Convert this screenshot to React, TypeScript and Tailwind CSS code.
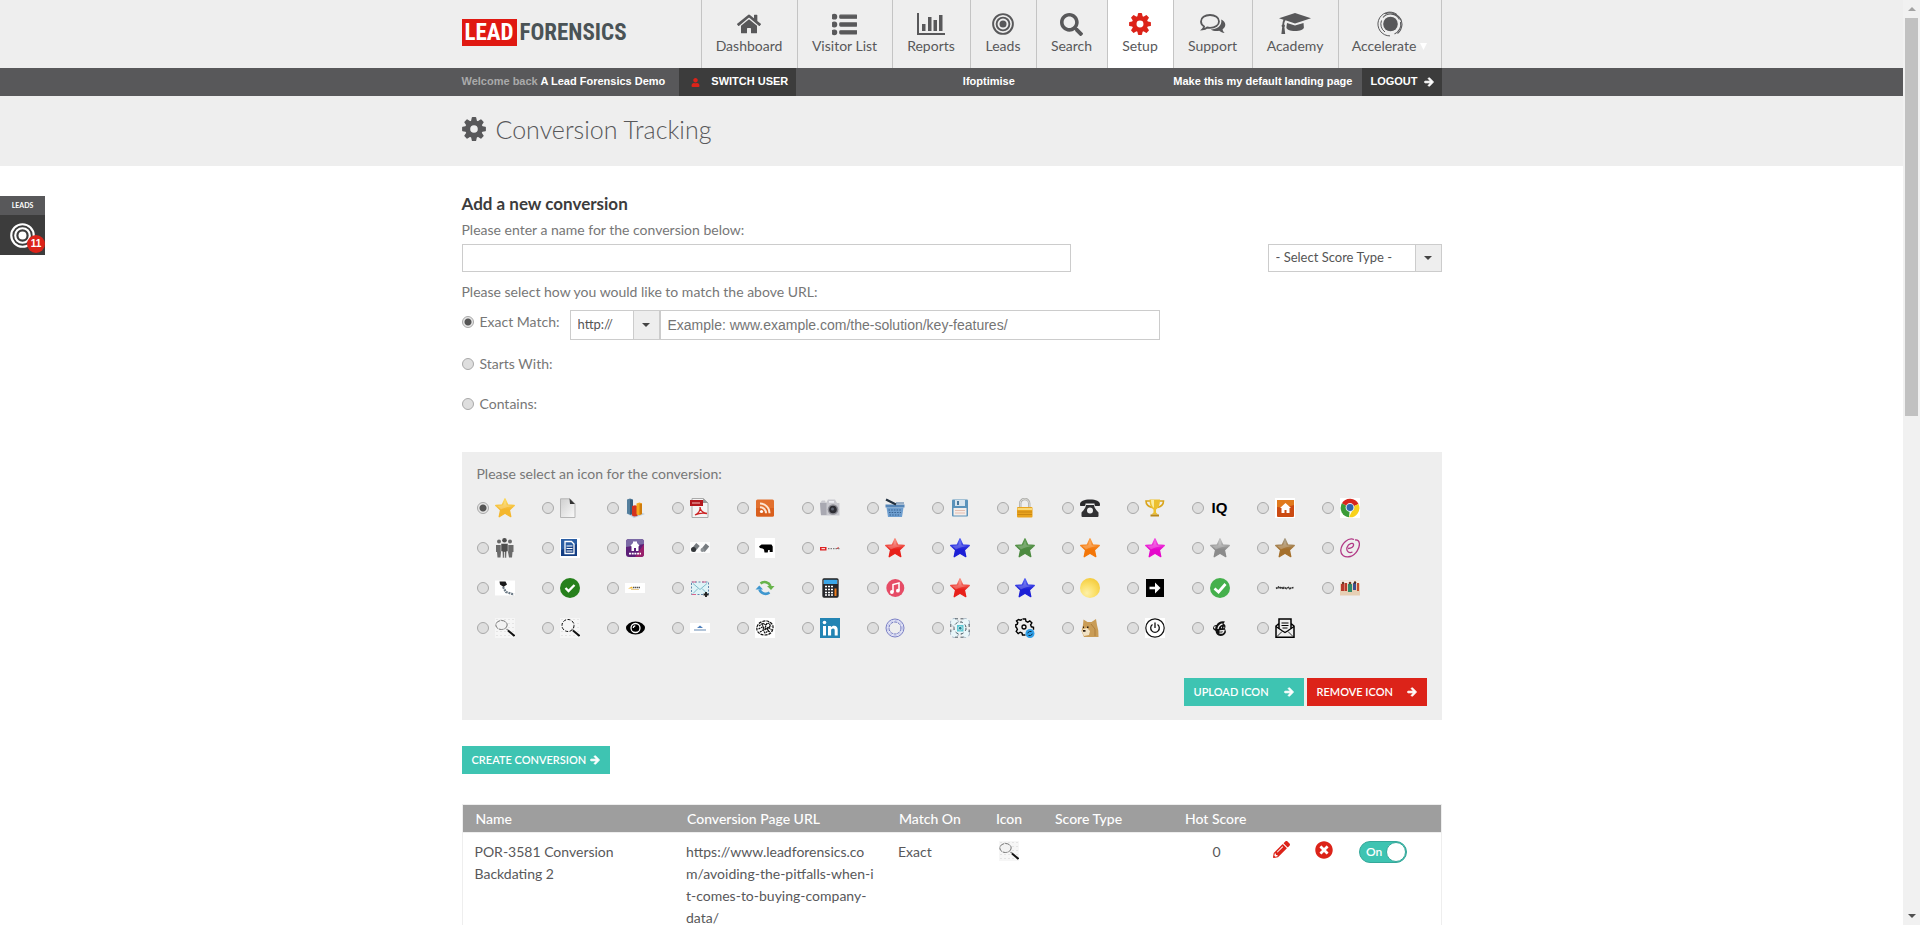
import React from "react";
import type { ReactNode } from "react";
import { FaArrowRight, FaHome, FaListUl, FaPencilAlt, FaSearch, FaTimesCircle, FaUser } from "react-icons/fa";

const STAR = "M10 .8l2.700 6 6.600.7-4.900 4.400 1.400 6.800L10 15.200l-5.800 3.500 1.400-6.800L.7 7.500l6.600-.7z";

function Icon({ children }: { children: ReactNode }) {
  return (
    <svg viewBox="0 0 20 20" className="size-5 shrink-0" aria-hidden="true">
      {children}
    </svg>
  );
}

function Star({ id, from, to }: { id: string; from: string; to: string }) {
  return (
    <Icon>
      <defs>
        <linearGradient id={id} x1="0" y1="0" x2="0" y2="1">
          <stop offset=".1" stopColor={from} />
          <stop offset=".6" stopColor={to} />
          <stop offset="1" stopColor={to} />
        </linearGradient>
      </defs>
      <path d={STAR} fill={`url(#${id})`} stroke={`url(#${id})`} strokeWidth="1.300" strokeLinejoin="round" />
      <path d="M10 2.500l1.800 4.800 5.700.7c-4 .8-8.500 1.600-11.500 3.400L2.500 8.100l5.600-.8z" fill="#fff" opacity=".22" />
    </Icon>
  );
}

function Gear({ className }: { className: string }) {
  return (
    <svg viewBox="0 0 24 24" className={className} fill="none" stroke="currentColor" aria-hidden="true">
      <circle cx="12" cy="12" r="6.300" strokeWidth="5" />
      {[0, 45, 90, 135].map((a) => (
        <path
          key={a}
          d="M9.800.6Q10 .1 10.500.1h3q.5 0 .7.500l.9 4.200h-6.200zM9.800 23.400q.2.500.7.500h3q.5 0 .7-.5l.9-4.200h-6.200z"
          fill="currentColor"
          stroke="none"
          transform={`rotate(${a} 12 12)`}
        />
      ))}
    </svg>
  );
}

function Target({ className }: { className: string }) {
  return (
    <svg viewBox="0 0 22 22" className={className} fill="none" stroke="currentColor" aria-hidden="true">
      <circle cx="11" cy="11" r="9.900" strokeWidth="1.900" />
      <circle cx="11" cy="11" r="6.400" strokeWidth="1.900" />
      <circle cx="11" cy="11" r="3.500" fill="currentColor" stroke="none" />
    </svg>
  );
}

function Arrow() {
  return <FaArrowRight className="size-[10px] overflow-visible" stroke="currentColor" strokeWidth="50" />;
}

function BarsIcon() {
  return (
    <svg viewBox="0 0 28 22" className="h-[22px] w-7" fill="currentColor" aria-hidden="true">
      <path d="M0 0h2v20h26v2H0zM5 11h3.500v7H5zM11 4h3.500v14H11zM16.500 7H20v11h-3.500zM22 2h3.500v16H22z" />
    </svg>
  );
}

function ChatIcon() {
  return (
    <svg viewBox="0 0 26 20" className="h-5 w-[26px]" aria-hidden="true">
      <path d="M10 1c5.200 0 9 2.800 9 6.400s-3.800 6.400-9 6.400c-1 0-1.900-.1-2.800-.3-1.500 1.200-3 1.700-4.700 1.900.9-.9 1.500-1.700 1.600-3C2.100 11.200 1 9.400 1 7.400 1 3.800 4.800 1 10 1z" fill="none" stroke="currentColor" strokeWidth="1.800" />
      <path d="M21.200 5.500c2.600 1.200 4.100 3 4.100 5.200 0 1.800-1 3.400-2.700 4.500.1 1.500.7 2.500 2 3.700-2.100-.1-4-.8-5.400-2.100-3.200.6-6.300.1-8.400-1.300C16.500 15.500 22.500 12 21.200 5.500z" fill="currentColor" />
    </svg>
  );
}

function CapIcon() {
  return (
    <svg viewBox="0 0 32 22" className="h-[22px] w-8" fill="currentColor" aria-hidden="true">
      <path d="M16 0l16 5.200-16 5.200-9.500-3.100C5.600 8.400 5.300 9.800 5.200 11.600c1 .7.900 1.900.2 2.500L6.200 21H2.400l.8-6.900c-.8-.7-.8-1.900.2-2.500.1-1.800.4-3.600 1.100-4.900L0 5.200z" />
      <path d="M8 10l8 2.600L24.500 10l.4 4.500c0 1.900-4 3.500-8.900 3.500s-8.600-1.600-8.600-3.500z" />
    </svg>
  );
}

function OrbitIcon() {
  return (
    <svg viewBox="0 0 26 26" className="size-[26px]" fill="none" stroke="currentColor" aria-hidden="true">
      <circle cx="13.500" cy="13" r="7.300" fill="currentColor" stroke="none" />
      <path d="M20 3.500A11.900 11.900 0 1 0 13 24.900" strokeWidth="1" />
      <path d="M6 6.500A10 10 0 0 1 22.500 8.500M23.500 11a10.300 10.300 0 0 1-6 12" strokeWidth="1.100" />
      <path d="M8 3a12 12 0 0 1 17 10.500q-.5 6-4.500 9" strokeWidth="1.100" />
      <path d="M4.500 9.500a9.600 9.600 0 0 0 3.500 11.500" strokeWidth="1" />
    </svg>
  );
}

function Magnifier({ wide = false }: { wide?: boolean }) {
  return (
    <Icon>
      <path d="M0 0h20v20H0z" fill="#f6f6f6" />
      <path d="M1 1.500h19M1 5.500h19M1 9.500h19M1 13.500h19M1 17.500h19" stroke="#e4e4e4" strokeDasharray="2 2" />
      {wide ? (
        <ellipse cx="6.500" cy="7" rx="5.700" ry="4.500" fill="#f2f2f2" stroke="#666" strokeWidth=".9" strokeDasharray="5 .7" />
      ) : (
        <circle cx="8" cy="7.500" r="6" fill="#f7f7f7" stroke="#111" strokeDasharray="3 1.500" />
      )}
      <path d="M11.500 11l2 1.500" stroke="#888" strokeWidth="1.500" />
      <path d="M13 12.500l6.500 5.500" stroke="#111" strokeWidth="2" />
    </Icon>
  );
}

function Recycle() {
  return (
    <Icon>
      <path d="M5.500 5.500A6.500 6.500 0 0 1 15.500 8" fill="none" stroke="#67b34a" strokeWidth="2.600" />
      <path d="M12 8h7.500L16 12z" fill="#67b34a" />
      <path d="M14.500 14.500A6.500 6.500 0 0 1 4.500 11.500" fill="none" stroke="#3f97cf" strokeWidth="2.600" />
      <path d="M.5 11.500H8L4.300 7.500z" fill="#3f97cf" />
    </Icon>
  );
}

const icons: { name: string; art: ReactNode }[] = [
  { name: "Gold star", art: <Star id="s1" from="#fbd75c" to="#f4b72d" /> },
  {
    name: "Page",
    art: (
      <Icon>
        <defs>
          <linearGradient id="page" x1="0" y1="0" x2="1" y2="1">
            <stop offset="0" stopColor="#cfcfcf" />
            <stop offset="1" stopColor="#fafafa" />
          </linearGradient>
        </defs>
        <path d="M.5.800h9.500l5 5V19.500H.5z" fill="url(#page)" stroke="#b5b5b5" />
        <path d="M9.500.500L15 6H10z" fill="#333" />
      </Icon>
    ),
  },
  {
    name: "Chart",
    art: (
      <Icon>
        <path d="M1 15l11-2 8 3-11 4z" fill="#b9cfe2" />
        <path d="M2 1.500L5 .500l3 1V16l-3 .8-3-1.200z" fill="#557f9d" />
        <path d="M5 1.500l3 .500V16l-3 .8z" fill="#365d7c" />
        <path d="M7 8l3-.7 2.500.700V18L9 18.500l-2-1z" fill="#d3321e" />
        <path d="M11.500 5.500l3-1 2.500 1V16l-3 1.200-2.500-1z" fill="#f6a81c" />
        <path d="M14.500 6l2.500-.5V16l-2.500 1z" fill="#cf7c0b" />
      </Icon>
    ),
  },
  {
    name: "PDF",
    art: (
      <Icon>
        <path d="M2 .5h11.500L18 5v14.500H2z" fill="#f4f4f4" stroke="#aaa" />
        <path d="M13 .500V5h5z" fill="#999" />
        <path d="M0 2h13v6H0z" fill="#b3161c" />
        <path d="M2 5h8" stroke="#d88" strokeWidth="1.500" />
        <path d="M5 17c4-2 5.500-5 5-8 .5 4 3 6 7 6.500-4-.8-8-.5-12 1.500z" fill="none" stroke="#cc2222" strokeWidth="1.300" />
      </Icon>
    ),
  },
  {
    name: "RSS",
    art: (
      <Icon>
        <rect x="1" y="1.500" width="18" height="17" rx="1.500" fill="#e2702e" />
        <path d="M1 10h18v7a1.500 1.500 0 0 1-1.500 1.500h-15A1.500 1.500 0 0 1 1 17z" fill="#d95f1d" />
        <circle cx="6.500" cy="13.500" r="1.600" fill="#fff" />
        <path d="M5 9.200a6 6 0 0 1 6 6M5 5.500a9.500 9.500 0 0 1 9.500 9.700" fill="none" stroke="#fde5d3" strokeWidth="2" />
      </Icon>
    ),
  },
  {
    name: "Camera",
    art: (
      <Icon>
        <path d="M0 5l2-2.500h3L6 5l2-3.500h7L17 5h2.500v12.500H1z" fill="#c9c9cf" />
        <path d="M0 5h6.500v12H1z" fill="#a9a9b2" />
        <path d="M9 3h5v1.800H9z" fill="#ededf2" />
        <circle cx="13" cy="11.500" r="5.300" fill="#8c8c94" />
        <circle cx="13" cy="11.500" r="3.800" fill="#2d2d34" />
        <circle cx="12.500" cy="11" r="1.500" fill="#5d6370" />
      </Icon>
    ),
  },
  {
    name: "Basket",
    art: (
      <Icon>
        <path d="M.500 6.500h19v3h-19z" fill="#5686b8" />
        <path d="M1.500 9.500h17L17 19H3z" fill="#6f9fd0" />
        <path d="M3.500 12h13M4 14.500h12M4.500 17h11" stroke="#37608f" strokeDasharray="1.500 1.200" />
        <path d="M1 1.500L11 6.500" stroke="#22303f" strokeWidth="2.200" />
        <path d="M11 5h8" stroke="#406c9a" />
      </Icon>
    ),
  },
  {
    name: "Disk",
    art: (
      <Icon>
        <rect x="2" y="1.500" width="16" height="17" rx="1" fill="#5b93bb" />
        <path d="M5 2h10v6H5z" fill="#d7e4ee" />
        <path d="M7 3h2v4H7z" fill="#49799d" />
        <path d="M3.500 10h13v7.500h-13z" fill="#f5ede9" />
        <path d="M5 12.500h10M5 15h10" stroke="#e3bfb2" />
      </Icon>
    ),
  },
  {
    name: "Lock",
    art: (
      <Icon>
        <path d="M5.200 10V5.500a4.500 4.500 0 0 1 9 0V10" fill="none" stroke="#a8a8a4" strokeWidth="2.400" />
        <path d="M5.200 10V5.500a4.500 4.500 0 0 1 9 0V10" fill="none" stroke="#efefec" strokeWidth=".8" />
        <rect x="2" y="9" width="15.500" height="10.500" rx="1" fill="#e9a41f" />
        <path d="M2.500 10h14.500v2H2.500z" fill="#f9d978" />
        <path d="M2.500 14h14.500M2.500 16.500h14.500" stroke="#bf7d0c" strokeWidth=".7" />
      </Icon>
    ),
  },
  {
    name: "Telephone",
    art: (
      <Icon>
        <path d="M0 6.500C0 3 4 1.500 10 1.500s10 1.500 10 5c0 1-.3 1.500-1 1.500h-3.500c-.8 0-1-1-1-2.500h-9C5.500 7 5.300 8 4.500 8H1C.3 8 0 7.500 0 6.500z" fill="#2a2a2c" />
        <path d="M6 7h8c.5 3 2 5 4.500 7.500V18q0 1-1 1h-15q-1 0-1-1v-3.500C4 12 5.500 10 6 7z" fill="#313133" />
        <circle cx="10" cy="12.500" r="3" fill="#eee" />
      </Icon>
    ),
  },
  {
    name: "Trophy",
    art: (
      <Icon>
        <path d="M5 3H1q0 5 6 6.500M14.500 3h4q0 5-6 6.500" fill="none" stroke="#d9a51c" strokeWidth="1.600" />
        <path d="M4.500 1.500h10.500c0 6-2 9-4 10v3l2 2H6.500l2-2v-3c-2-1-4-4-4-10z" fill="#ecc02f" />
        <path d="M6 2h3v8C7 8.500 6 6 6 2z" fill="#faec9c" />
        <path d="M5.500 16.500h8.500v2H5.500z" fill="#b9871a" />
      </Icon>
    ),
  },
  {
    name: "IQ",
    art: (
      <span className="flex size-5 items-center justify-center font-['Liberation_Sans',sans-serif] text-[15px] leading-5 font-bold text-black" aria-hidden="true">
        IQ
      </span>
    ),
  },
  {
    name: "Home",
    art: (
      <Icon>
        <path d="M0 0h20v20H0z" fill="#fff" />
        <rect x="2" y="2" width="17" height="17" rx="1" fill="#cb4a12" />
        <path d="M2 2h17v5q-8 3-17 2z" fill="#e07a1e" />
        <path d="M5 10l5.500-5 5.500 5h-1.500v5h-3v-3h-2v3h-3v-5z" fill="#fff" />
      </Icon>
    ),
  },
  {
    name: "Browser",
    art: (
      <Icon>
        <path d="M0 0h20v20H0z" fill="#fff" />
        <path d="M10 10L1.900 5.300A9.400 9.400 0 0 1 18.500 6z" fill="#d8261d" />
        <path d="M10 10L1.900 5.300A9.400 9.400 0 0 0 9 19.300z" fill="#3b9c37" />
        <path d="M10 10l8.500-4A9.400 9.400 0 0 1 9 19.300L12.500 12z" fill="#f8d21c" />
        <circle cx="10" cy="9.500" r="4.400" fill="#e7eef5" />
        <circle cx="10" cy="9.500" r="3.400" fill="#2f65b0" />
      </Icon>
    ),
  },
  {
    name: "People",
    art: (
      <Icon>
        <g fill="#6a6a6a">
          <circle cx="4" cy="3.500" r="2" />
          <circle cx="15" cy="3.500" r="2" />
          <path d="M1 7h5v7l-.5 5.500h-3L2 14H1zM13 7h5.500v7h-1l-.5 5.500h-3L13 14z" />
        </g>
        <circle cx="9.500" cy="2.300" r="2.300" fill="#4d4d4d" />
        <path d="M6 5.500h7v8h-1.300l-.5 6.500h-1.400V14h-.6v6H7.800l-.5-6.500H6z" fill="#4d4d4d" stroke="#eee" strokeWidth=".5" />
      </Icon>
    ),
  },
  {
    name: "Document",
    art: (
      <Icon>
        <path d="M0 0h20v20H0z" fill="#fff" />
        <path d="M1 1h16v17H1z" fill="#153f84" />
        <path d="M1 1h16v5L1 12z" fill="#2a5da3" />
        <path d="M5 3.500h6.500L14 6v9.500H5z" fill="none" stroke="#fff" strokeWidth="1.300" />
        <path d="M6.500 8h6M6.500 10.500h6M6.500 13h6" stroke="#fff" strokeWidth="1.200" />
      </Icon>
    ),
  },
  {
    name: "House badge",
    art: (
      <Icon>
        <rect x="1" y="1" width="18" height="18" rx="3" fill="#5c1f78" />
        <path d="M1 9V4a3 3 0 0 1 3-3h12a3 3 0 0 1 3 3v2z" fill="#7b6aa5" />
        <path d="M10 19h6a3 3 0 0 0 3-3V6z" fill="#99206b" />
        <path d="M5.500 7.500L8 5V3.500h4V5l2.500 2.500-1 1V13h-2.500v-3H9v3H6.500V8.500z" fill="#fff" />
        <path d="M4 15.700h12" stroke="#fff" strokeWidth="1.800" strokeDasharray="2 .7" />
      </Icon>
    ),
  },
  {
    name: "Pipes",
    art: (
      <Icon>
        <path d="M0 4h20v11H0z" fill="#fbfbfb" />
        <path d="M3 12.500l5-6M13 12.500l4.500-5.500" stroke="#777c80" strokeWidth="4.500" />
        <circle cx="3.500" cy="11.500" r="2.500" fill="#33373a" />
        <circle cx="12.500" cy="12" r="2" fill="#8b9094" />
      </Icon>
    ),
  },
  {
    name: "Bear",
    art: (
      <Icon>
        <path d="M0 0h20v20H0z" fill="#fff" />
        <path d="M4 8.500l2.500-2h10l1.200 2V14h-3v-2h-1.500l-.5 2.500H9.500L9 11.500l-1.500-1L5 10z" fill="#000" />
      </Icon>
    ),
  },
  {
    name: "Wordmark",
    art: (
      <Icon>
        <path d="M0 9h6.500v3.500H0z" fill="#d22" />
        <path d="M1.500 10.700h3.500" stroke="#fff" />
        <path d="M8 10.700h12" stroke="#666" strokeDasharray="1.500 1" />
        <path d="M17 11l1.500-2" stroke="#d33" />
      </Icon>
    ),
  },
  { name: "Red star", art: <Star id="s2" from="#f7877a" to="#e8201a" /> },
  { name: "Blue star", art: <Star id="s3" from="#5560f2" to="#1c1fd6" /> },
  { name: "Green star", art: <Star id="s4" from="#5c9a4f" to="#4d8a40" /> },
  { name: "Orange star", art: <Star id="s5" from="#fb9d45" to="#f37608" /> },
  { name: "Pink star", art: <Star id="s6" from="#f24ee0" to="#e507cb" /> },
  { name: "Silver star", art: <Star id="s7" from="#bdbdbd" to="#8b8b8b" /> },
  { name: "Bronze star", art: <Star id="s8" from="#a89a80" to="#a5702c" /> },
  {
    name: "Letter e",
    art: (
      <Icon>
        <path d="M8 10.500c3.500 0 6-2 5.500-4C13 4.500 8.500 5 7 9.500c-1 4 2 6 5.500 4.500M14 1.500C8-1 1.500 6 .8 12c-.5 5 4 8 9.500 6.500C16 17 20 9.500 19.300 5c-.4-2.600-2.300-3.300-4.300-3" fill="none" stroke="#b23a86" strokeWidth="1.300" />
      </Icon>
    ),
  },
  {
    name: "Spray",
    art: (
      <Icon>
        <path d="M0 2.500h20v15H0z" fill="#fff" />
        <path d="M4.500 3.500h6l1.500 3-3.500 2.500L5 6.500z" fill="#1b1b1b" />
        <path d="M8 9l3 5 8 2.500" fill="none" stroke="#6c7a86" strokeWidth="2.200" strokeDasharray="2 .8" />
      </Icon>
    ),
  },
  {
    name: "Dark tick",
    art: (
      <Icon>
        <circle cx="10" cy="10" r="10" fill="#26801c" />
        <path d="M5.500 10l3 3 6-6" fill="none" stroke="#fff" strokeWidth="2.300" />
      </Icon>
    ),
  },
  {
    name: "Banner",
    art: (
      <Icon>
        <path d="M0 5h20v10H0z" fill="#fff" />
        <path d="M3 10.500l4-2 1 2z" fill="#f0b429" />
        <path d="M8 9.500h7" stroke="#555" strokeWidth="1.500" strokeDasharray="1.500 .5" />
        <path d="M6 11.500h8" stroke="#e3c277" strokeWidth=".8" />
      </Icon>
    ),
  },
  {
    name: "Add mail",
    art: (
      <Icon>
        <rect x="1.500" y="4" width="17" height="12.500" fill="#dff3f7" stroke="#5f88ad" strokeDasharray="2 1.500" />
        <path d="M3 5.500l7 6 7-6M3 15.500l5-5M17 15.500l-5-5" fill="none" stroke="#7fbccb" />
        <path d="M2 4h4M12 4h4M2 16.500h4" stroke="#d9628c" />
        <path d="M13.500 16.500h5M16 14v5" stroke="#222" strokeWidth="1.900" />
      </Icon>
    ),
  },
  { name: "Refresh", art: <Recycle /> },
  {
    name: "Calculator",
    art: (
      <Icon>
        <path d="M4 1h13v5H4z" fill="#3ba6e8" />
        <rect x="3" y="1" width="15" height="18" rx="1" fill="none" stroke="#222" strokeWidth="1.300" />
        <path d="M3 6h15v13H3z" fill="#26272b" />
        <path d="M5 8.500h8.500M5 11.500h8.500M5 14.500h8.500M5 17h8.500" stroke="#fff" strokeWidth="1.700" strokeDasharray="2 1" />
        <path d="M14.500 10.500h2v7.500h-2z" fill="#ef7b1a" />
      </Icon>
    ),
  },
  {
    name: "Music",
    art: (
      <Icon>
        <circle cx="10.300" cy="10" r="9" fill="#e64c66" />
        <path d="M8 14V6.500l6-1.500v7.500" fill="none" stroke="#fff" strokeWidth="1.500" />
        <circle cx="6.900" cy="14" r="1.900" fill="#fff" />
        <circle cx="12.900" cy="12.700" r="1.900" fill="#fff" />
      </Icon>
    ),
  },
  { name: "Light red star", art: <Star id="s9" from="#f7877a" to="#e8201a" /> },
  { name: "Deep blue star", art: <Star id="s10" from="#5560f2" to="#1c1fd6" /> },
  {
    name: "Gold coin",
    art: (
      <Icon>
        <defs>
          <radialGradient id="coin" cx=".35" cy=".75" r=".8">
            <stop offset="0" stopColor="#fdf0a8" />
            <stop offset=".5" stopColor="#fbe06a" />
            <stop offset="1" stopColor="#f3ca3a" />
          </radialGradient>
        </defs>
        <circle cx="10" cy="10" r="10" fill="url(#coin)" />
      </Icon>
    ),
  },
  {
    name: "Arrow",
    art: (
      <Icon>
        <path d="M1 1h18v18H1z" fill="#000" />
        <path d="M4.500 10h8.500" stroke="#fff" strokeWidth="2.600" />
        <path d="M10 4.500l5.500 5.500-5.500 5.500z" fill="#fff" />
      </Icon>
    ),
  },
  {
    name: "Light tick",
    art: (
      <Icon>
        <circle cx="10" cy="10" r="10" fill="#45b04c" />
        <path d="M4.500 10.500l4 3.500 7-8" fill="none" stroke="#fff" strokeWidth="2.700" />
      </Icon>
    ),
  },
  {
    name: "Script",
    art: (
      <Icon>
        <path d="M1 10.500l2.500-1.500 1 1.500 2-1.500 1.500 2 1-1.500 2.500 1 2-1 1 1 4-1" fill="none" stroke="#333" strokeWidth="1.600" strokeDasharray="2 .5" />
      </Icon>
    ),
  },
  {
    name: "Crowd",
    art: (
      <Icon>
        <path d="M0 2.500h20v15H0z" fill="#e6cfb4" />
        <path d="M0 2.500h20v3H0z" fill="#f3ece4" />
        <path d="M1 6h3v7H1zM4.500 5H7v8H4.500z" fill="#b73a2a" />
        <path d="M8 6h4v8H8z" fill="#2f8a6a" />
        <path d="M13 5h3v7h-3z" fill="#3d4f8e" />
        <path d="M17 5h2v8h-2z" fill="#c44c2c" />
        <circle cx="3" cy="5" r="1.200" fill="#6b3a23" />
        <circle cx="10" cy="5" r="1.300" fill="#6b3a23" />
        <circle cx="15" cy="4.500" r="1.200" fill="#4b2a1b" />
      </Icon>
    ),
  },
  { name: "Wide magnifier", art: <Magnifier wide /> },
  { name: "Magnifier", art: <Magnifier /> },
  {
    name: "Eye",
    art: (
      <Icon>
        <ellipse cx="10.500" cy="10" rx="9.500" ry="6.500" fill="#000" />
        <circle cx="10.500" cy="10" r="4.500" fill="none" stroke="#fff" strokeWidth="1.300" />
        <path d="M8.300 10a2.200 2.200 0 0 1 2-2.200" fill="none" stroke="#fff" strokeWidth="1.200" />
      </Icon>
    ),
  },
  {
    name: "Boat",
    art: (
      <Icon>
        <path d="M0 5h20v10H0z" fill="#fff" />
        <path d="M7 10l3-2.500 3 2.500z" fill="#4f81bd" />
        <path d="M4 12h12" stroke="#8aa6c4" strokeWidth="1.300" />
      </Icon>
    ),
  },
  {
    name: "Scribble",
    art: (
      <Icon>
        <path d="M0 0h20v20H0z" fill="#fff" />
        <path d="M2 9c1-5 7-6.500 10-6s6.500 3 6 7-3 7-8 7-9-3-8-8z" fill="none" stroke="#111" strokeWidth="1.200" strokeDasharray="3 1" />
        <path d="M4 8l4-3 2 2 4-2 2 4M3.500 11l4-2 2 3 4-3 3 3M5 14l3-2 2 3 3-2 2 1M7 6l2 4M12 5l-2 5 4 3M15 8l-3 4" fill="none" stroke="#111" strokeWidth="1.200" strokeDasharray="2 .7" />
      </Icon>
    ),
  },
  {
    name: "LinkedIn",
    art: (
      <Icon>
        <path d="M0 0h20v20H0z" fill="#2384b3" />
        <circle cx="4.500" cy="4.500" r="1.800" fill="#fff" />
        <path d="M3 8h3v9.500H3zM8 8h2.900v1.300C11.500 8.300 12.700 7.700 14 7.700c2.700 0 3.700 1.700 3.700 4.400v5.400h-3v-4.900c0-1.300-.4-2.200-1.600-2.200-1.400 0-2 .9-2 2.200v4.900H8z" fill="#fff" />
      </Icon>
    ),
  },
  {
    name: "Blue seal",
    art: (
      <Icon>
        <circle cx="10" cy="10" r="9" fill="#e3e5f6" stroke="#7b80c6" />
        <circle cx="10" cy="10" r="6" fill="#eee" stroke="#6f75bf" strokeDasharray="3 .8" />
        <circle cx="10" cy="10" r="7.500" fill="none" stroke="#c3c6e9" strokeDasharray="3 2" />
      </Icon>
    ),
  },
  {
    name: "Drone",
    art: (
      <Icon>
        <g fill="#e9f6f9" stroke="#3e4c55" strokeWidth=".9" strokeDasharray="3 2.500">
          <circle cx="4.500" cy="4.500" r="4" stroke="#9ab" />
          <circle cx="15.500" cy="4.500" r="4" stroke="#9ab" />
          <circle cx="4.500" cy="15.500" r="4" stroke="#9ab" />
          <circle cx="15.500" cy="15.500" r="4" stroke="#9ab" />
          <circle cx="10" cy="10" r="6" />
          <path d="M5 .8h10M5 19.200h10M.8 6v8M19.200 6v8" />
        </g>
        <path d="M7 7h6.500v6.500H7z" fill="#5ec8d3" />
        <circle cx="10.200" cy="10.200" r="1.800" fill="#1f7f92" stroke="#fff" strokeWidth=".6" />
      </Icon>
    ),
  },
  {
    name: "Settings sync",
    art: (
      <Icon>
        <path d="M7.500 1h3l.5 2.300 1.800.8 2-1.300 2.100 2.100-1.300 2 .8 1.900 2.100.5v2.500M10.500 17h-3l-.5-2-1.800-.8-2 1.300-2-2.100 1.200-2L1.600 9.600.8 9V6.800l1.500-.6.5-1.500L1.500 3l2-1.500 1.900.7L7 1.500" fill="none" stroke="#000" strokeWidth="1.400" />
        <circle cx="9" cy="9" r="2" fill="none" stroke="#000" strokeWidth="1.300" />
        <circle cx="15" cy="15.500" r="4.500" fill="#2f9fe8" />
        <path d="M12.500 15l2-1.500h2M17.500 16l-2 1.500h-2" stroke="#0b2c47" fill="none" />
      </Icon>
    ),
  },
  {
    name: "Dog",
    art: (
      <Icon>
        <path d="M3 7l.5-5.500L7.500 4h4L16 1l1 6 1.300 5.500L18.500 19H4L1.500 13z" fill="#c99c56" />
        <path d="M3 11l4-1 3 3-1 4-5 1-2-4z" fill="#f1e2c4" />
        <path d="M3 12h2.500v1.800H3zM7 8.500h1.500V10H7zM3 8.500h1V10H3z" fill="#2b1d12" />
        <path d="M11 6l4 5v7" stroke="#ae7f3c" fill="none" />
      </Icon>
    ),
  },
  {
    name: "Power",
    art: (
      <Icon>
        <path d="M0 0h20v20H0z" fill="#fff" />
        <circle cx="10" cy="10" r="9.200" fill="none" stroke="#111" strokeWidth="1.200" />
        <path d="M7.500 6.500a4.300 4.300 0 1 0 5 0M10 4.500V10" fill="none" stroke="#111" strokeWidth="1.300" />
      </Icon>
    ),
  },
  {
    name: "Monkey",
    art: (
      <Icon>
        <path d="M6.500 7Q9 2.500 15 3.500l-1.500 2q3 1.500 1.500 5l1 3.500q-1.500 4-5.500 4-4.500-.5-5-5l-2.500-2q0-4 3.500-4z" fill="#111" />
        <path d="M8 11q.5-4 4.500-5M9.500 13l4.500-.5q-.5 3.500-4.500 2.500M5 10.500q-1-1.500.5-2" fill="none" stroke="#eee" strokeWidth="1.300" />
        <path d="M11 9.500h.8M13.500 9.500h.8" stroke="#fff" strokeWidth="1.500" />
      </Icon>
    ),
  },
  {
    name: "Open mail",
    art: (
      <Icon>
        <path d="M4 10.500V1h12v9.500M4 5.500L1 8v11.200h18V8l-3-2.500" fill="none" stroke="#000" strokeWidth="1.500" />
        <path d="M1 8.500l6.500 4.500 2.500 1.500 2.500-1.500L19 8.500" fill="none" stroke="#000" strokeWidth="1.300" />
        <path d="M6.500 5h7M6.500 7.500h7M7.500 10h5" stroke="#000" />
        <path d="M2 18.500l5-5M18 18.500l-5-5" stroke="#000" strokeWidth=".8" />
      </Icon>
    ),
  },
];

const navItems: { label: string; art: ReactNode; width: string; active?: boolean; caret?: boolean }[] = [
  { label: "Dashboard", art: <FaHome className="size-6" />, width: "w-24" },
  { label: "Visitor List", art: <FaListUl className="size-[25px]" stroke="currentColor" strokeWidth="24" />, width: "w-[95px]" },
  { label: "Reports", art: <BarsIcon />, width: "w-[78px]" },
  { label: "Leads", art: <Target className="size-[22px]" />, width: "w-[66px]" },
  { label: "Search", art: <FaSearch className="size-[23px]" />, width: "w-[71px]" },
  { label: "Setup", art: <Gear className="size-[22px] text-[#dc2319]" />, width: "w-[66px]", active: true },
  { label: "Support", art: <ChatIcon />, width: "w-[79px]" },
  { label: "Academy", art: <CapIcon />, width: "w-[86px]" },
  { label: "Accelerate", art: <OrbitIcon />, width: "w-[103px]", caret: true },
];

function Radio({ id, name, checked, label }: { id: string; name: string; checked?: boolean; label?: string }) {
  return (
    <input
      type="radio"
      id={id}
      name={name}
      defaultChecked={checked}
      aria-label={label}
      className="size-3 shrink-0 appearance-none rounded-full border border-[#a9a9a9] bg-[#dedede] checked:bg-[radial-gradient(circle,#555_0_3px,#e6e6e6_4px)]"
    />
  );
}

function Dropdown({ label, options, className }: { label: string; options: string[]; className: string }) {
  return (
    <div className={`relative border border-[#ccc] bg-white ${className}`}>
      <select aria-label={label} className="size-full appearance-none pr-7 pb-0.5 pl-[7px] text-[13px] text-[#555] outline-none">
        {options.map((o) => (
          <option key={o}>{o}</option>
        ))}
      </select>
      <span className="pointer-events-none absolute inset-y-0 right-0 flex w-[26px] items-center justify-center border-l border-[#ccc] bg-[#eee]">
        <svg viewBox="0 0 8 4" className="h-1 w-2" aria-hidden="true">
          <path d="M0 0h8L4 4z" fill="#444" />
        </svg>
      </span>
    </div>
  );
}

function Scrollbar() {
  return (
    <div className="flex w-[17px] shrink-0 flex-col items-center justify-between bg-[#f1f1f1]" aria-hidden="true">
      <div className="flex h-[416px] w-[13px] flex-col items-center">
        <svg viewBox="0 0 8 4" className="my-[7px] h-1 w-2 shrink-0">
          <path d="M0 4h8L4 0z" fill="#a3a3a3" />
        </svg>
        <div className="w-full flex-1 bg-[#c1c1c1]" />
      </div>
      <svg viewBox="0 0 8 4" className="my-[7px] h-1 w-2">
        <path d="M0 0h8L4 4z" fill="#505050" />
      </svg>
    </div>
  );
}

export default function App() {
  return (
    <div className="relative flex h-screen overflow-hidden bg-white font-['Lato','Liberation_Sans',sans-serif] text-sm text-[#777]">
      <div className="min-w-0 flex-1 overflow-hidden">
        <header>
          <div className="bg-[#eee]">
            <div className="mx-auto flex h-[68px] w-full max-w-[980px] items-center justify-between">
              <a href="#home" className="flex items-center gap-[3px] pb-1 font-['Liberation_Sans_Narrow','Roboto_Condensed','Liberation_Sans',sans-serif] text-[23px] leading-[27px] font-bold text-[#4a5356]">
                <span className="bg-[#e01912] px-[3px] text-white">LEAD</span>
                <span>FORENSICS</span>
              </a>
              <nav className="flex h-full border-l border-[#c4c4c4]">
                {navItems.map((n) => (
                  <a
                    key={n.label}
                    href={`#${n.label}`}
                    className={`flex h-full flex-col items-center border-r border-[#c4c4c4] pt-2.5 text-[#58585a] ${n.width} ${n.active ? "bg-white" : ""}`}
                  >
                    <span className="flex h-7 items-center">{n.art}</span>
                    <span className="flex items-center gap-1 text-sm leading-4 whitespace-nowrap">
                      {n.label}
                      {n.caret && (
                        <svg viewBox="0 0 7 7" className="size-[7px]" aria-hidden="true">
                          <path d="M0 0h7L3.500 7z" fill="#fff" />
                        </svg>
                      )}
                    </span>
                  </a>
                ))}
              </nav>
            </div>
          </div>
          <div className="bg-[#58585a] font-['Liberation_Sans',sans-serif] text-[11px] font-bold text-white">
            <div className="mx-auto flex h-7 w-full max-w-[980px] items-center justify-between">
              <div className="flex h-full items-center gap-3.5">
                <p>
                  <span className="text-[#aaa]">Welcome back</span> A Lead Forensics Demo
                </p>
                <button type="button" className="flex h-full items-center gap-[11px] bg-[#3c3c3c] pr-2 pl-3">
                  <FaUser className="size-[9px] text-[#dc2319]" />
                  SWITCH USER
                </button>
              </div>
              <p className="pl-2">lfoptimise</p>
              <div className="flex h-full items-center gap-2.5">
                <a href="#default">Make this my default landing page</a>
                <button type="button" className="flex h-full items-center gap-1.5 bg-[#3c3c3c] px-2">
                  LOGOUT
                  <Arrow />
                </button>
              </div>
            </div>
          </div>
        </header>

        <div className="bg-[#eee]">
          <div className="mx-auto flex h-[70px] w-full max-w-[980px] items-center gap-2.5 pb-1 text-[#58585a]">
            <Gear className="size-6 text-[#58585a]" />
            <h1 className="text-[25px] leading-8 font-light">Conversion Tracking</h1>
          </div>
        </div>

        <main className="mx-auto w-full max-w-[980px] pt-7">
          <form>
            <h2 className="text-[17px] leading-5 font-bold text-[#3c3c3c]">Add a new conversion</h2>
            <label htmlFor="conversion-name" className="mt-1.5 block leading-5">
              Please enter a name for the conversion below:
            </label>
            <div className="mt-1 flex justify-between">
              <input id="conversion-name" type="text" className="h-7 w-[609px] border border-[#ccc] px-2 outline-none" />
              <Dropdown label="Score type" options={["- Select Score Type -"]} className="h-7 w-[174px]" />
            </div>

            <fieldset>
              <legend className="pt-2.5 leading-5">Please select how you would like to match the above URL:</legend>
              <div className="mt-2 flex h-[30px]">
                <div className="flex h-6 w-[108px] items-center">
                  <Radio id="match-exact" name="match" checked />
                  <label htmlFor="match-exact" className="pl-1.5">
                    Exact Match:
                  </label>
                </div>
                <Dropdown label="Protocol" options={["http://", "https://"]} className="h-[30px] w-[90px]" />
                <input
                  type="text"
                  aria-label="URL"
                  placeholder="Example: www.example.com/the-solution/key-features/"
                  className="h-[30px] w-[500px] border border-[#ccc] px-[7px] font-['Liberation_Sans',sans-serif] text-sm outline-none placeholder:text-[#757575]"
                />
              </div>
              <div className="mt-2.5 flex h-7 items-center">
                <Radio id="match-starts" name="match" />
                <label htmlFor="match-starts" className="pl-1.5">
                  Starts With:
                </label>
              </div>
              <div className="mt-3 flex h-7 items-center">
                <Radio id="match-contains" name="match" />
                <label htmlFor="match-contains" className="pl-1.5">
                  Contains:
                </label>
              </div>
            </fieldset>

            <section className="mt-[34px] bg-[#eee] px-[15px] pt-3 pb-3.5">
              <h3 className="leading-5 font-normal">Please select an icon for the conversion:</h3>
              <div className="mt-3.5 flex flex-wrap gap-y-5 pb-10">
                {icons.map((icon, i) => (
                  <label key={icon.name} className="flex w-[65px] items-center gap-1.5">
                    <Radio id={`icon-${i}`} name="icon" checked={i === 0} label={icon.name} />
                    {icon.art}
                  </label>
                ))}
              </div>
              <div className="flex justify-end gap-[3px] text-[11px] font-semibold text-white">
                <button type="button" className="flex h-7 w-[120px] items-center justify-between bg-[#3ec4b2] px-2.5">
                  UPLOAD ICON
                  <Arrow />
                </button>
                <button type="button" className="flex h-7 w-[120px] items-center justify-between bg-[#dc2319] px-2.5">
                  REMOVE ICON
                  <Arrow />
                </button>
              </div>
            </section>

            <button type="submit" className="mt-[26px] flex h-7 w-[148px] items-center justify-between bg-[#3ec4b2] px-2.5 text-[11px] font-semibold whitespace-nowrap text-white">
              CREATE CONVERSION
              <Arrow />
            </button>
          </form>

          <table className="mt-[30px] w-full table-fixed border-collapse border border-[#eee] text-left">
            <colgroup>
              <col className="w-[212px]" />
              <col className="w-[212px]" />
              <col className="w-[97px]" />
              <col className="w-[59px]" />
              <col className="w-[130px]" />
              <col className="w-[89px]" />
              <col className="w-[42px]" />
              <col className="w-[44px]" />
              <col />
            </colgroup>
            <thead className="bg-[#9e9e9e] text-white">
              <tr className="h-7 border-b border-[#eee]">
                <th className="pl-[13px] font-medium">Name</th>
                <th className="pl-[13px] font-medium">Conversion Page URL</th>
                <th className="pl-[13px] font-medium">Match On</th>
                <th className="pl-[13px] font-medium">Icon</th>
                <th className="pl-[13px] font-medium">Score Type</th>
                <th className="pl-[13px] font-medium">Hot Score</th>
                <th aria-label="Edit" />
                <th aria-label="Delete" />
                <th aria-label="Status" />
              </tr>
            </thead>
            <tbody>
              <tr className="align-top leading-[22px] text-[#58585a]">
                <td className="py-2 pr-8 pl-3">POR-3581 Conversion Backdating 2</td>
                <td className="py-2 pl-3">
                  https://www.leadforensics.co
                  <br />
                  m/avoiding-the-pitfalls-when-i
                  <br />
                  t-comes-to-buying-company-
                  <br />
                  data/
                </td>
                <td className="py-2 pl-3">Exact</td>
                <td className="py-2 pl-4">
                  <Magnifier wide />
                </td>
                <td />
                <td className="py-2 text-center">0</td>
                <td className="py-2 pl-3">
                  <button type="button" aria-label="Edit conversion" className="block text-[#dc2319]">
                    <FaPencilAlt className="size-[17px]" />
                  </button>
                </td>
                <td className="py-2 pl-3">
                  <button type="button" aria-label="Delete conversion" className="block text-[#dc2319]">
                    <FaTimesCircle className="size-[18px]" />
                  </button>
                </td>
                <td className="py-2 pl-3">
                  <button
                    type="button"
                    role="switch"
                    aria-checked="true"
                    className="flex h-[22px] w-12 items-center justify-between rounded-full border border-[#35a89a] bg-[#3ec4b2] pl-1.5 text-xs font-semibold text-white"
                  >
                    On
                    <span className="size-5 rounded-full border border-[#35a89a] bg-white" />
                  </button>
                </td>
              </tr>
            </tbody>
          </table>
        </main>
      </div>

      <Scrollbar />

      <aside className="absolute top-[196px] left-0 w-[45px] bg-[#3c3c3c] text-white">
        <p className="bg-[#58585a] text-center text-[7px] leading-[19px] font-bold">LEADS</p>
        <div className="flex h-10 items-center justify-center">
          <Target className="size-[25px]" />
        </div>
        <span className="absolute right-0 bottom-0.5 flex size-[18px] items-center justify-center rounded-full bg-[#dc2319] font-['Liberation_Sans',sans-serif] text-[10px] font-bold">
          11
        </span>
      </aside>
    </div>
  );
}
